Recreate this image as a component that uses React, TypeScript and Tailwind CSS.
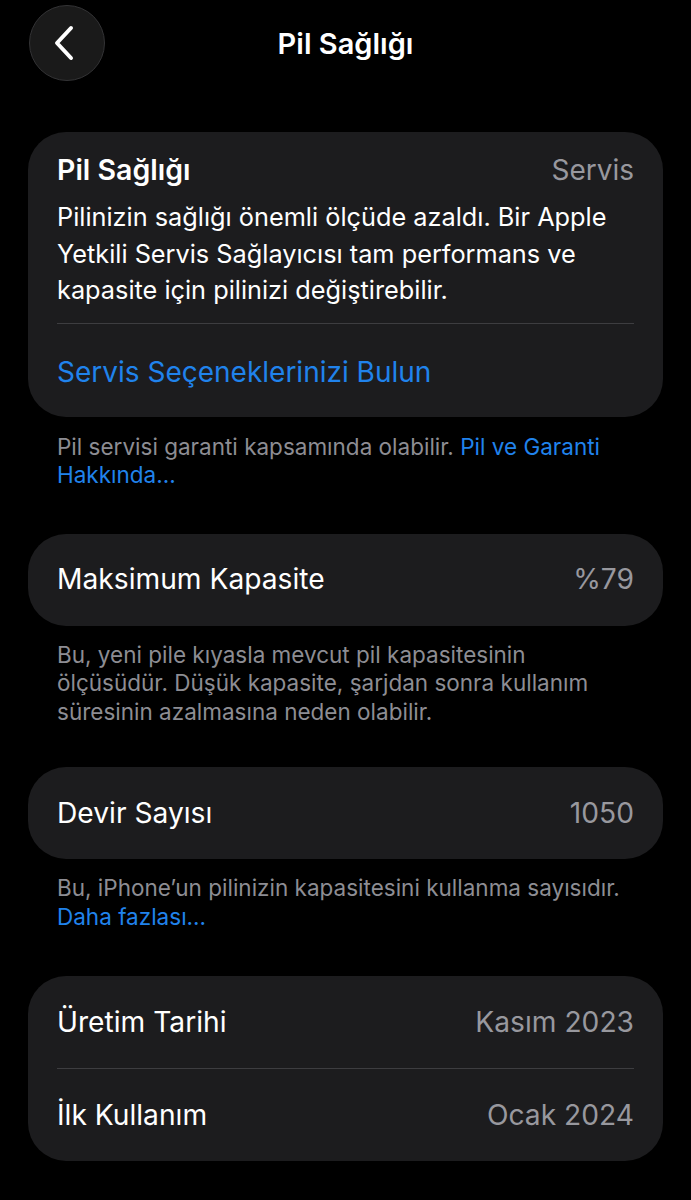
import React from "react";

const font = { fontFamily: 'Inter, "Noto Sans", sans-serif' };

function Row({ label, value }: { label: string; value: string }) {
  return (
    <div className="flex items-center justify-between h-[92px]">
      <span className="text-[28.2px] text-white">{label}</span>
      <span className="text-[28.2px] text-[#98989e]">{value}</span>
    </div>
  );
}

export default function App() {
  return (
    <div className="min-h-[1200px] w-[691px] bg-black text-white" style={font}>
      <div className="relative h-[88px] flex items-center justify-center">
        <div className="absolute left-[29px] top-[5px] w-[76px] h-[76px] rounded-full bg-[#1a1a1a] border border-[#333335] flex items-center justify-center">
          <svg width="22" height="36" viewBox="0 0 22 36" fill="none" className="mr-[6px]">
            <path d="M18 3 L4 18 L18 33" stroke="white" strokeWidth="4" strokeLinecap="round" strokeLinejoin="round" />
          </svg>
        </div>
        <h1 className="text-[29px] font-semibold">Pil Sağlığı</h1>
      </div>

      <div className="px-[28px] pt-[44px]">
        <div className="rounded-[38px] bg-[#1c1c1e] px-[29px] pt-[18px]">
          <div className="flex items-center justify-between h-[40px]">
            <span className="text-[28.5px] font-semibold">Pil Sağlığı</span>
            <span className="text-[28px] text-[#98989e]">Servis</span>
          </div>
          <p className="text-[25.3px] leading-[36.5px] mt-[9px] pb-[14px] border-b border-[#3d3d40]">
            Pilinizin sağlığı önemli ölçüde azaldı. Bir Apple Yetkili Servis Sağlayıcısı tam performans ve kapasite için pilinizi değiştirebilir.
          </p>
          <div className="h-[93px] pt-[4px] flex items-center">
            <span className="text-[28px] text-[#2083ec]">Servis Seçeneklerinizi Bulun</span>
          </div>
        </div>
        <p className="px-[29px] pt-[16px] text-[22.5px] leading-[28.5px] text-[#8d8d93]">
          Pil servisi garanti kapsamında olabilir. <span className="text-[#2083ec]">Pil ve Garanti Hakkında...</span>
        </p>

        <div className="mt-[44px] rounded-[38px] bg-[#1c1c1e] px-[29px]">
          <Row label="Maksimum Kapasite" value="%79" />
        </div>
        <p className="px-[29px] pt-[15px] text-[22.5px] leading-[28.5px] text-[#8d8d93]">
          Bu, yeni pile kıyasla mevcut pil kapasitesinin ölçüsüdür. Düşük kapasite, şarjdan sonra kullanım süresinin azalmasına neden olabilir.
        </p>

        <div className="mt-[41px] rounded-[38px] bg-[#1c1c1e] px-[29px]">
          <Row label="Devir Sayısı" value="1050" />
        </div>
        <p className="px-[29px] pt-[15px] text-[22.5px] leading-[28.5px] text-[#8d8d93]">
          Bu, iPhone’un pilinizin kapasitesini kullanma sayısıdır. <span className="text-[#2083ec]">Daha fazlası...</span>
        </p>

        <div className="mt-[45px] rounded-[38px] bg-[#1c1c1e] px-[29px]">
          <div className="border-b border-[#3d3d40]">
            <Row label="Üretim Tarihi" value="Kasım 2023" />
          </div>
          <Row label="İlk Kullanım" value="Ocak 2024" />
        </div>
      </div>
    </div>
  );
}
